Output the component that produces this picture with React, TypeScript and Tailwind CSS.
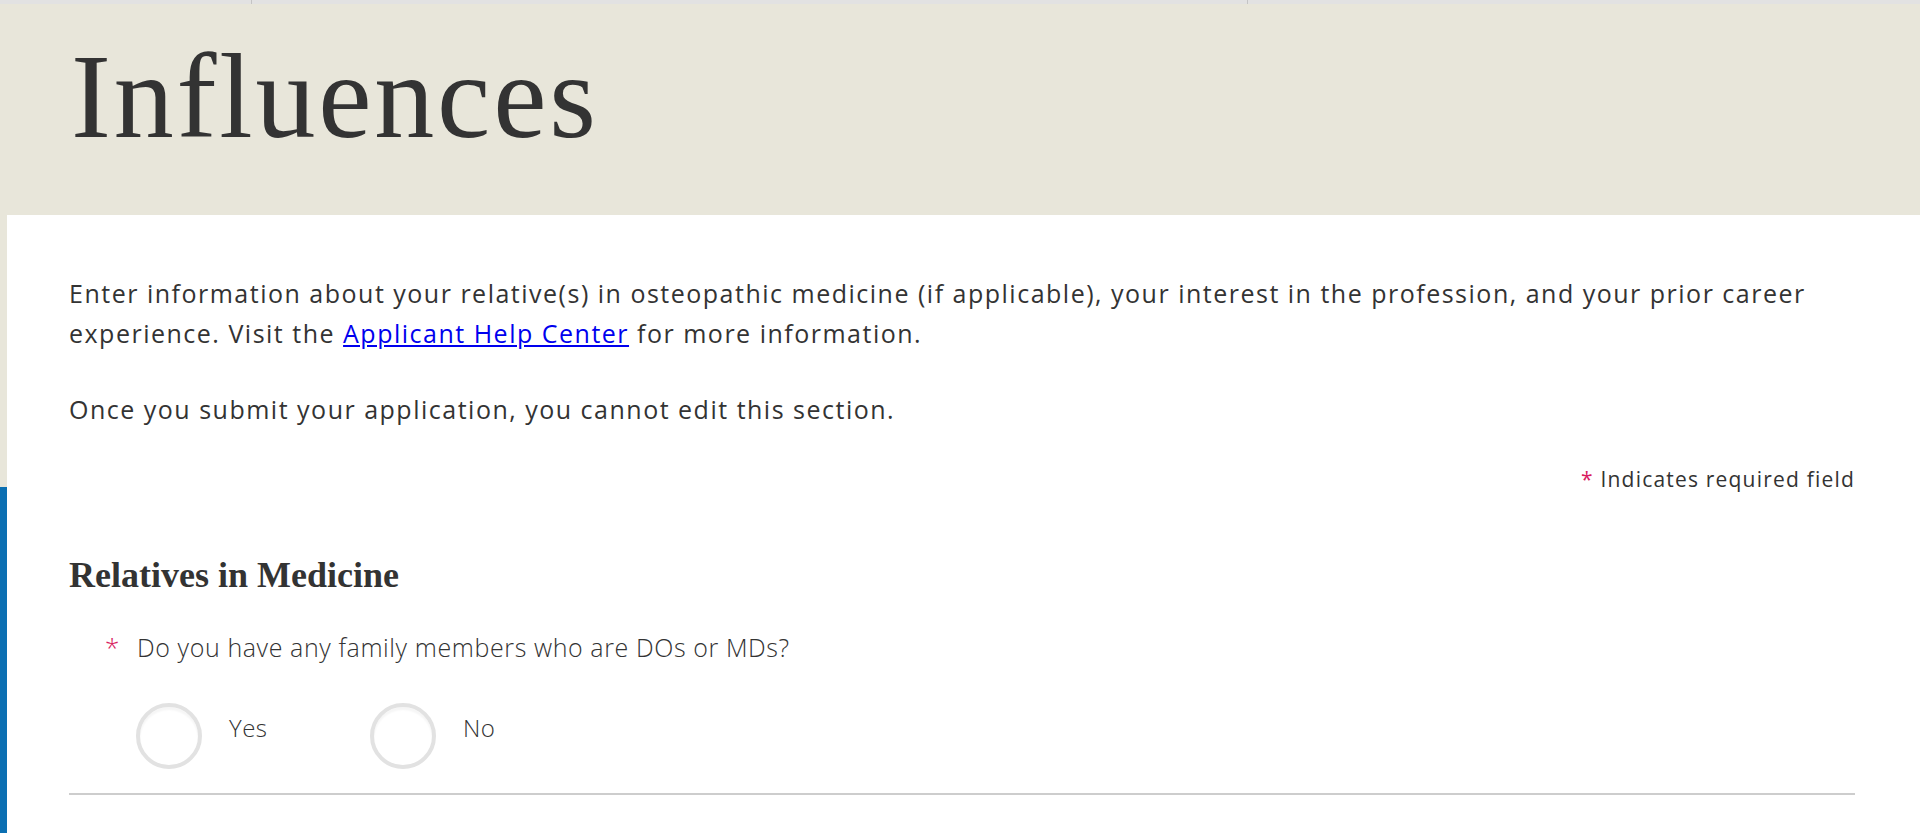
export default function App() {
  const sans = { fontFamily: '"Open Sans", "Liberation Sans", sans-serif' };
  const serif = { fontFamily: '"Liberation Serif", serif' };

  return (
    <div className="flex min-h-[833px] flex-col bg-white text-[#333]" style={sans}>
      {/* browser-ish top strip */}
      <div className="flex h-[4px] bg-[#e2e2e2]">
        <div className="w-[252px] border-r border-[#c4c4c4]" />
        <div className="w-[996px] border-r border-[#c4c4c4]" />
        <div className="flex-1" />
      </div>

      {/* page title */}
      <header className="h-[211px] bg-[#e8e6da] pl-[71px] pt-[33px]">
        <h1 className="text-[120px] leading-none tracking-[2.8px] text-[#333]" style={serif}>
          Influences
        </h1>
      </header>

      <div className="flex flex-1">
        {/* left edge strip */}
        <div className="flex w-[7px] flex-col">
          <div className="h-[272px] bg-[#e8e6da]" />
          <div className="flex-1 bg-[#0b6fb2]" />
        </div>

        {/* form panel */}
        <main className="flex-1 bg-white pl-[62px] pr-[65px] pt-[58px]">
          <p className="text-[25px] leading-[40px] tracking-[1.5px]">
            Enter information about your relative(s) in osteopathic medicine (if applicable), your
            interest in the profession, and your prior career experience. Visit the{" "}
            <a href="#" className="text-[#0000ee] underline underline-offset-2">
              Applicant Help Center
            </a>{" "}
            for more information.
          </p>
          <p className="mt-[36px] text-[25px] leading-[40px] tracking-[1.5px]">
            Once you submit your application, you cannot edit this section.
          </p>

          <p className="mt-[36px] text-right text-[21px] leading-[28px] tracking-[1.2px]">
            <span className="text-[#d81b60]">*</span> Indicates required field
          </p>

          <h2 className="mt-[60px] text-[36px] font-bold leading-[44px]" style={serif}>
            Relatives in Medicine
          </h2>

          {/* question */}
          <div className="mt-[34px] flex pl-[36px] text-[25px] font-light leading-[32px] tracking-[0.6px]">
            <span className="w-[32px] text-[26px] text-[#d81b60]">*</span>
            <span>Do you have any family members who are DOs or MDs?</span>
          </div>

          {/* radio options */}
          <div className="mt-[40px] flex pl-[67px]">
            {["Yes", "No"].map((opt) => (
              <label key={opt} className="flex w-[234px] cursor-pointer items-start">
                <span className="h-[66px] w-[66px] shrink-0 rounded-full border-[4px] border-[#e2e2e2] shadow-[inset_0_3px_2px_rgba(0,0,0,0.04)]" />
                <span className="ml-[27px] pt-[9px] text-[24px] font-light leading-[32px] tracking-[0.5px]">
                  {opt}
                </span>
              </label>
            ))}
          </div>

          <div className="mt-[24px] h-[2px] bg-[#cdcdcd]" />
        </main>
      </div>
    </div>
  );
}
